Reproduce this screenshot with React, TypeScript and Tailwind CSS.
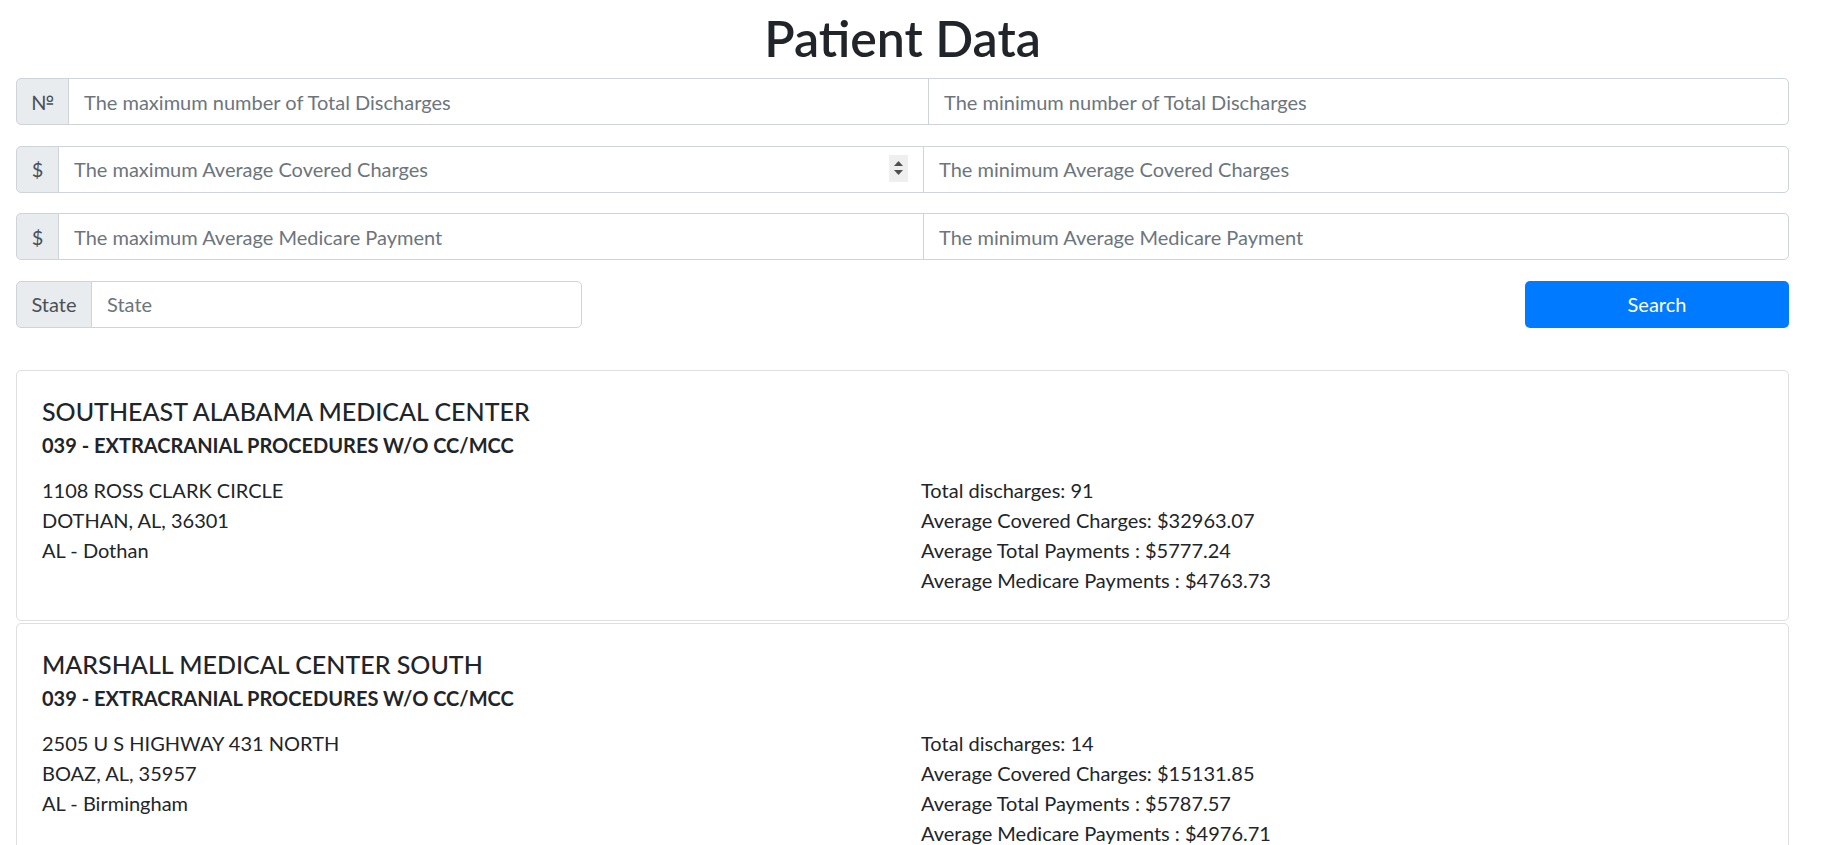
import React from "react";

interface Hospital {
  name: string;
  drg: string;
  street: string;
  city: string;
  region: string;
  discharges: number;
  covered: string;
  total: string;
  medicare: string;
}

const hospitals: Hospital[] = [
  {
    name: "SOUTHEAST ALABAMA MEDICAL CENTER",
    drg: "039 - EXTRACRANIAL PROCEDURES W/O CC/MCC",
    street: "1108 ROSS CLARK CIRCLE",
    city: "DOTHAN, AL, 36301",
    region: "AL - Dothan",
    discharges: 91,
    covered: "$32963.07",
    total: "$5777.24",
    medicare: "$4763.73",
  },
  {
    name: "MARSHALL MEDICAL CENTER SOUTH",
    drg: "039 - EXTRACRANIAL PROCEDURES W/O CC/MCC",
    street: "2505 U S HIGHWAY 431 NORTH",
    city: "BOAZ, AL, 35957",
    region: "AL - Birmingham",
    discharges: 14,
    covered: "$15131.85",
    total: "$5787.57",
    medicare: "$4976.71",
  },
];

const inputCls =
  "h-full w-full min-w-0 bg-white border border-[#ced4da] px-[15px] text-[20px] text-[#495057] outline-none placeholder:text-[#6c757d]";

function Prepend({ label, width }: { label: string; width: string }) {
  return (
    <span
      className={`${width} shrink-0 flex items-center justify-center bg-[#e9ecef] border border-[#ced4da] rounded-l-[5px] text-[20px] text-[#495057]`}
    >
      {label}
    </span>
  );
}

function Spinner() {
  return (
    <span className="absolute right-[16px] top-[9px] w-[19px] h-[27px] bg-[#efefef] flex flex-col items-center justify-center gap-[4px]">
      <svg width="9" height="5" viewBox="0 0 9 5">
        <path d="M4.5 0 L9 5 L0 5 Z" fill="#505050" />
      </svg>
      <svg width="9" height="5" viewBox="0 0 9 5">
        <path d="M0 0 L9 0 L4.5 5 Z" fill="#505050" />
      </svg>
    </span>
  );
}

function RangeRow({
  label,
  width,
  max,
  min,
  spinner = false,
}: {
  label: string;
  width: string;
  max: string;
  min: string;
  spinner?: boolean;
}) {
  return (
    <div className="flex h-[47px] mb-[20.5px]">
      <Prepend label={label} width={width} />
      <div className="relative flex-1 -ml-px">
        <input className={inputCls} placeholder={max} readOnly />
        {spinner && <Spinner />}
      </div>
      <div className="flex-1 -ml-px">
        <input className={`${inputCls} rounded-r-[5px]`} placeholder={min} readOnly />
      </div>
    </div>
  );
}

function HospitalCard({ h, first }: { h: Hospital; first?: boolean }) {
  return (
    <div
      className={`border border-[#dfdfdf] rounded-[5px] bg-white p-[25px] ${first ? "" : "mt-[2px]"}`}
    >
      <h5 className="text-[25px] leading-[30px] font-medium mb-[7px]">{h.name}</h5>
      <h6 className="text-[20px] leading-[24px] font-bold">{h.drg}</h6>
      <div className="grid grid-cols-2 gap-x-[37px] mt-[18px] text-[20px] leading-[30px]">
        <div>
          <p>{h.street}</p>
          <p>{h.city}</p>
          <p>{h.region}</p>
        </div>
        <div>
          <p>Total discharges: {h.discharges}</p>
          <p>Average Covered Charges: {h.covered}</p>
          <p>Average Total Payments : {h.total}</p>
          <p>Average Medicare Payments : {h.medicare}</p>
        </div>
      </div>
    </div>
  );
}

export default function App() {
  return (
    <div className="min-h-screen bg-white text-[#212529] font-['Lato','Noto_Sans',sans-serif]">
      <div className="pl-[16px] pr-[44px]">
        <h1 className="pt-[8px] mb-[10px] text-center text-[50px] leading-[60px] font-semibold">
          Patient Data
        </h1>

        <RangeRow
          label="№"
          width="w-[53px]"
          max="The maximum number of Total Discharges"
          min="The minimum number of Total Discharges"
        />
        <RangeRow
          label="$"
          width="w-[43px]"
          max="The maximum Average Covered Charges"
          min="The minimum Average Covered Charges"
          spinner
        />
        <RangeRow
          label="$"
          width="w-[43px]"
          max="The maximum Average Medicare Payment"
          min="The minimum Average Medicare Payment"
        />

        <div className="flex justify-between items-start h-[47px]">
          <div className="flex h-full w-[566px]">
            <Prepend label="State" width="w-[76px]" />
            <div className="flex-1 -ml-px">
              <input className={`${inputCls} rounded-r-[5px]`} placeholder="State" readOnly />
            </div>
          </div>
          <button className="h-full w-[264px] rounded-[5px] bg-[#007bff] text-white text-[20px]">
            Search
          </button>
        </div>

        <div className="mt-[42px]">
          {hospitals.map((h, i) => (
            <HospitalCard key={i} h={h} first={i === 0} />
          ))}
        </div>
      </div>
    </div>
  );
}
